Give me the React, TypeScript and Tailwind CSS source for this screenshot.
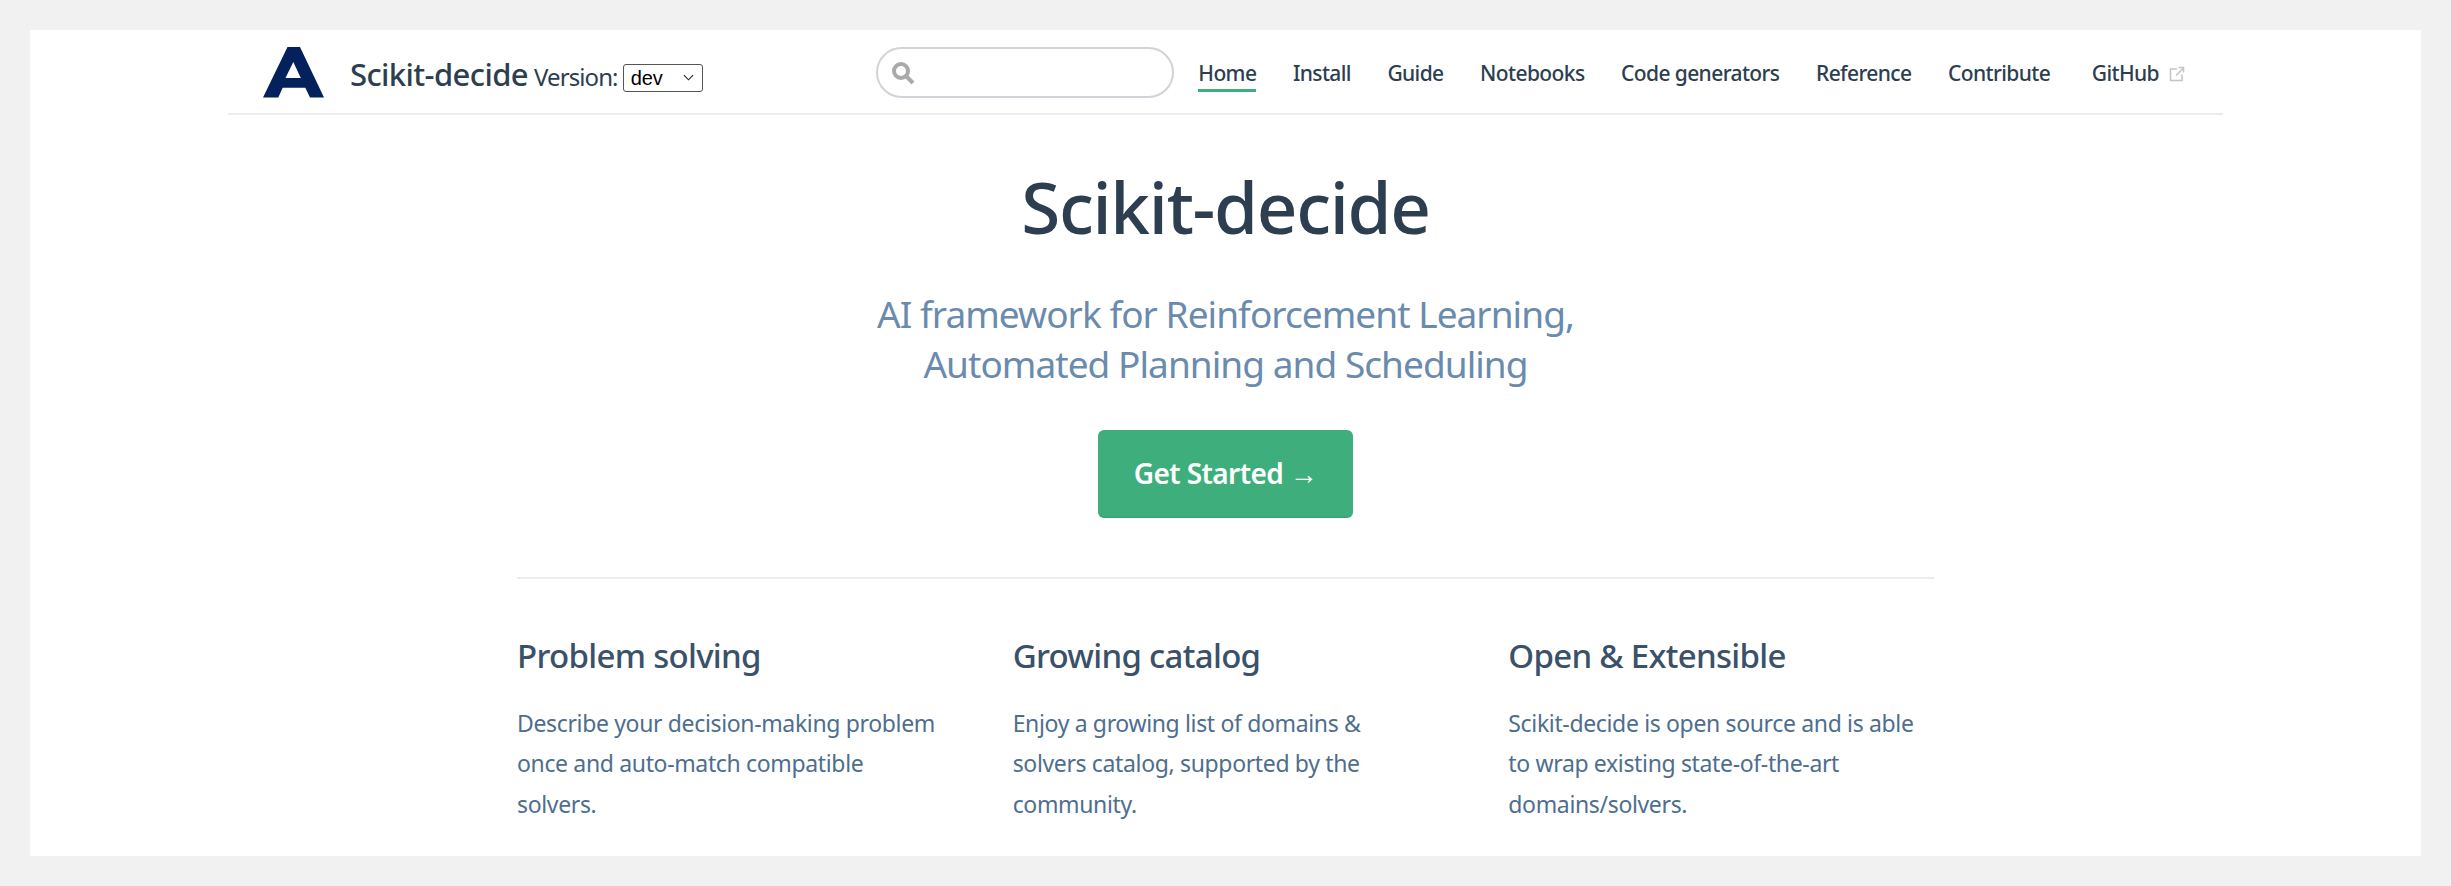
const navLinks = ['Home', 'Install', 'Guide', 'Notebooks', 'Code generators', 'Reference', 'Contribute'];

const features = [
	{
		title: 'Problem solving',
		lines: ['Describe your decision-making problem', 'once and auto-match compatible', 'solvers.'],
	},
	{
		title: 'Growing catalog',
		lines: ['Enjoy a growing list of domains &', 'solvers catalog, supported by the', 'community.'],
	},
	{
		title: 'Open & Extensible',
		lines: ['Scikit-decide is open source and is able', 'to wrap existing state-of-the-art', 'domains/solvers.'],
	},
];

function Logo() {
	return (
		<svg viewBox="0 0 62 51" className="w-[62px] h-[51px] shrink-0 mt-[2px]" fill="#04215b" fillRule="evenodd">
			<path d="M24.5 0H37L61 50.5H47L42.3 40.7H19.7L15.3 50.5H0ZM30.3 15L22.5 31H37.8Z" />
		</svg>
	);
}

function SearchIcon() {
	return (
		<svg viewBox="0 0 24 24" className="w-6 h-6" fill="none" stroke="#aaaaaa" strokeWidth="4">
			<circle cx="10" cy="10" r="7" />
			<path d="M15 15L22 22" />
		</svg>
	);
}

function ExternalIcon() {
	return (
		<svg viewBox="0 0 16 16" className="w-4 h-4 ml-[10px]" fill="none" stroke="#c4c4c4" strokeWidth="1.5">
			<path d="M8 3H1.5V14.5H13V8.5" />
			<path d="M7 9.5L14 2.5M9.5 1.5H14.5V6.5" />
		</svg>
	);
}

export default function App() {
	return (
		<div className="h-[886px] bg-[#f1f1f1] p-[30px] font-['Noto_Sans',sans-serif] overflow-hidden">
			<div className="h-[826px] bg-white overflow-hidden">
				{/* top bar */}
				<header className="mx-[198px] h-[85px] border-b-2 border-[#eaecef] flex items-center pl-[35px] pr-[38px]">
					<Logo />
					<span className="ml-[25px] mt-[6px] text-[31px] font-medium text-[#2c3e50] tracking-[-0.6px]">Scikit-decide</span>
					<span className="ml-[6px] mt-[10px] text-[24px] text-[#2c3e50] tracking-[-0.9px]">Version:</span>
					<div className="relative ml-[5px] mt-[12px]">
						<select className="block w-[80px] h-[28px] border border-[#555] rounded-[3px] bg-white appearance-none text-[20px] leading-[24px] font-['Liberation_Sans',sans-serif] text-black pl-[7px]">
							<option>dev</option>
						</select>
						<svg viewBox="0 0 12 7" className="absolute right-[9px] top-[10px] w-[11px] h-[7px]" fill="none" stroke="#222" strokeWidth="1.2">
							<path d="M1 1L6 6L11 1" />
						</svg>
					</div>
					<div className="ml-auto mt-[2px] w-[298px] h-[51px] border-2 border-[#d0d3d8] rounded-[26px] flex items-center pl-[13px]">
						<SearchIcon />
					</div>
					<nav className="ml-[24px] flex items-center gap-[36.5px] text-[21px] font-medium text-[#2c3e50] tracking-[-0.6px]">
						{navLinks.map((link) => (
							<span
								key={link}
								className={link === 'Home' ? 'border-b-[3px] border-[#3eaf7c] h-[41px] pt-[8px] leading-[28px]' : 'h-[41px] pt-[8px] leading-[28px]'}
							>
								{link}
							</span>
						))}
						<span className="ml-[5px] h-[41px] pt-[8px] leading-[28px] flex items-start">
							GitHub
							<span className="mt-[7px]">
								<ExternalIcon />
							</span>
						</span>
					</nav>
				</header>

				{/* hero */}
				<section className="flex flex-col items-center">
					<h1 className="mt-[46px] text-[71px] leading-[92px] font-medium text-[#2c3e50] tracking-[-1.3px]">Scikit-decide</h1>
					<p className="mt-[36px] text-[37px] leading-[50px] text-[#6a8bad] text-center tracking-[-0.95px]">
						AI framework for Reinforcement Learning,
						<br />
						Automated Planning and Scheduling
					</p>
					<button className="mt-[41px] w-[255px] h-[88px] bg-[#3eaf7c] border-b-2 border-[#3aa675] rounded-[6px] text-white text-[28px] font-semibold tracking-[-0.6px]">
						Get Started →
					</button>
				</section>

				{/* features */}
				<section className="mx-[487px] mt-[59px] border-t-2 border-[#eaecef] pt-[55px] grid grid-cols-3 gap-[70px]">
					{features.map((feature) => (
						<div key={feature.title}>
							<h2 className="text-[33px] leading-[44px] font-medium text-[#3a5169] tracking-[-0.7px]">{feature.title}</h2>
							<p className="mt-[25px] text-[23px] leading-[40.4px] text-[#4e6e8e] tracking-[-0.35px] whitespace-nowrap">
								{feature.lines.map((line) => (
									<span key={line} className="block">
										{line}
									</span>
								))}
							</p>
						</div>
					))}
				</section>
			</div>
		</div>
	);
}
